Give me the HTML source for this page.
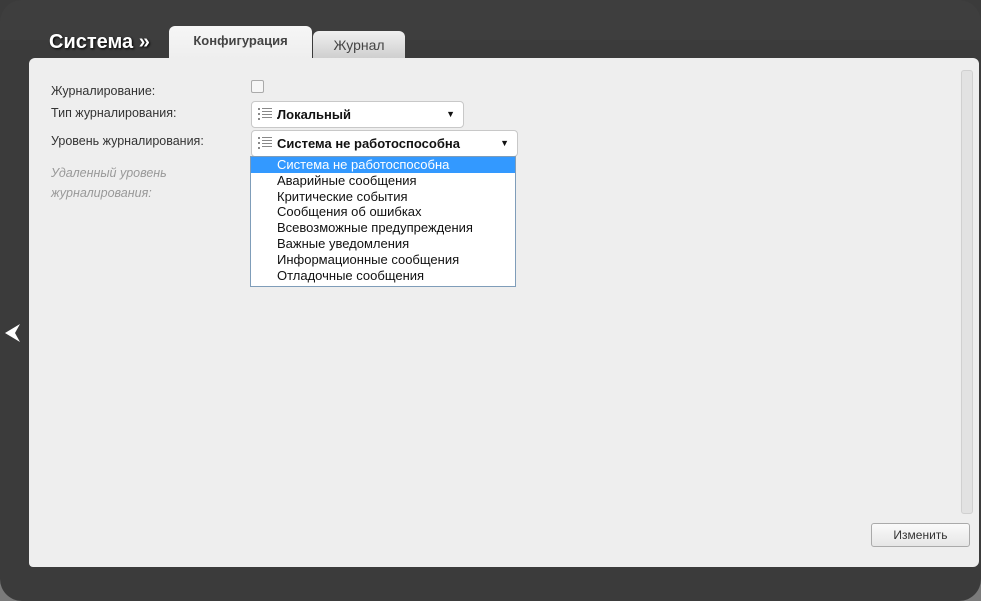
<!DOCTYPE html><html><head><meta charset="utf-8"><style>
body{margin:0;width:981px;height:601px;background:#7a7a7a;position:relative;overflow:hidden;font-family:"Liberation Sans",Arial,sans-serif}
.dark{position:absolute;left:0;top:0;width:981px;height:601px;background:#3b3b3b;border-radius:0 0 22px 22px / 0 0 22px 22px}
.dark2{position:absolute;left:0;top:0;width:981px;height:40px;background:#3e3e3e;border-radius:22px 22px 0 0}
.panel{position:absolute;left:29px;top:58px;width:950px;height:509px;background:#eeeeee;border-radius:6px 6px 6px 4px}
.title{position:absolute;left:49px;top:31px;color:#fff;font-weight:bold;font-size:20px;text-shadow:1px 1px 2px #000}
.tab{position:absolute;top:28px;height:31px;border-radius:6px 6px 0 0;text-align:center;font-size:14px}
.lbl{position:absolute;left:51px;font-size:12.5px;color:#333}
.sel{position:absolute;left:251px;background:#fff;border:1px solid #c8c8c8;border-radius:4px;font-weight:bold;font-size:13px;color:#111}
.ic{position:absolute;left:6px;top:6px;width:14px;height:12px}
.arr{position:absolute;right:8px;top:0;font-size:9px;line-height:25px}
.dd{position:absolute;left:250px;top:156px;width:264px;height:129px;background:#fff;border:1px solid #7f9db9;font-size:13px;color:#111}
.dd div{height:15.8px;line-height:16px;padding-left:26px}
</style></head><body>
<div class="dark"></div><div class="dark2"></div>
<div class="title">Система »</div>
<div class="tab" style="left:169px;width:143px;background:linear-gradient(#f6f6f6,#eeeeee);top:26px;height:33px;line-height:30px;font-weight:bold;color:#444;font-size:13px">Конфигурация</div>
<div class="tab" style="left:313px;width:92px;background:linear-gradient(#f0f0f0,#cfcfcf);top:31px;height:27px;line-height:28px;color:#444">Журнал</div>
<div class="panel"></div>
<div style="position:absolute;left:961px;top:70px;width:10px;height:442px;background:#e2e2e2;border:1px solid #d0d0d0;border-radius:3px"></div>
<svg style="position:absolute;left:5px;top:324px" width="16" height="18" viewBox="0 0 16 18"><path d="M0 9 L15 0 L10 9 L15 18 Z" fill="#fff"/></svg>
<div class="lbl" style="top:84px">Журналирование:</div>
<div class="lbl" style="top:106px">Тип журналирования:</div>
<div class="lbl" style="top:134px">Уровень журналирования:</div>
<div class="lbl" style="top:163px;color:#999;font-style:italic;line-height:20px">Удаленный уровень<br>журналирования:</div>
<div style="position:absolute;left:251px;top:80px;width:11px;height:11px;border:1px solid #aaa;border-radius:2px;background:#f6f6f6"></div>
<div class="sel" style="top:101px;width:211px;height:25px;line-height:25px"><svg class="ic" style="top:6px" viewBox="0 0 14 12"><g fill="#888"><rect x="0" y="0" width="2" height="2"/><rect x="0" y="5" width="2" height="2"/><rect x="0" y="10" width="2" height="2"/><rect x="4" y="0" width="10" height="1"/><rect x="4" y="3" width="10" height="1"/><rect x="4" y="6" width="10" height="1"/><rect x="4" y="9" width="10" height="1"/></g></svg><span style="margin-left:25px">Локальный</span><span class="arr">▼</span></div>
<div class="sel" style="top:130px;width:265px;height:25px;line-height:25px"><svg class="ic" viewBox="0 0 14 12"><g fill="#888"><rect x="0" y="0" width="2" height="2"/><rect x="0" y="5" width="2" height="2"/><rect x="0" y="10" width="2" height="2"/><rect x="4" y="0" width="10" height="1"/><rect x="4" y="3" width="10" height="1"/><rect x="4" y="6" width="10" height="1"/><rect x="4" y="9" width="10" height="1"/></g></svg><span style="margin-left:25px">Система не работоспособна</span><span class="arr">▼</span></div>
<div class="dd"><div style="background:#3399ff;color:#fff">Система не работоспособна</div><div>Аварийные сообщения</div><div>Критические события</div><div>Сообщения об ошибках</div><div>Всевозможные предупреждения</div><div>Важные уведомления</div><div>Информационные сообщения</div><div>Отладочные сообщения</div></div>
<div style="position:absolute;left:871px;top:523px;width:97px;height:22px;border:1px solid #aaa;border-radius:3px;background:linear-gradient(#fafafa,#e6e6e6);text-align:center;line-height:22px;font-size:12px;color:#333">Изменить</div>
</body></html>
